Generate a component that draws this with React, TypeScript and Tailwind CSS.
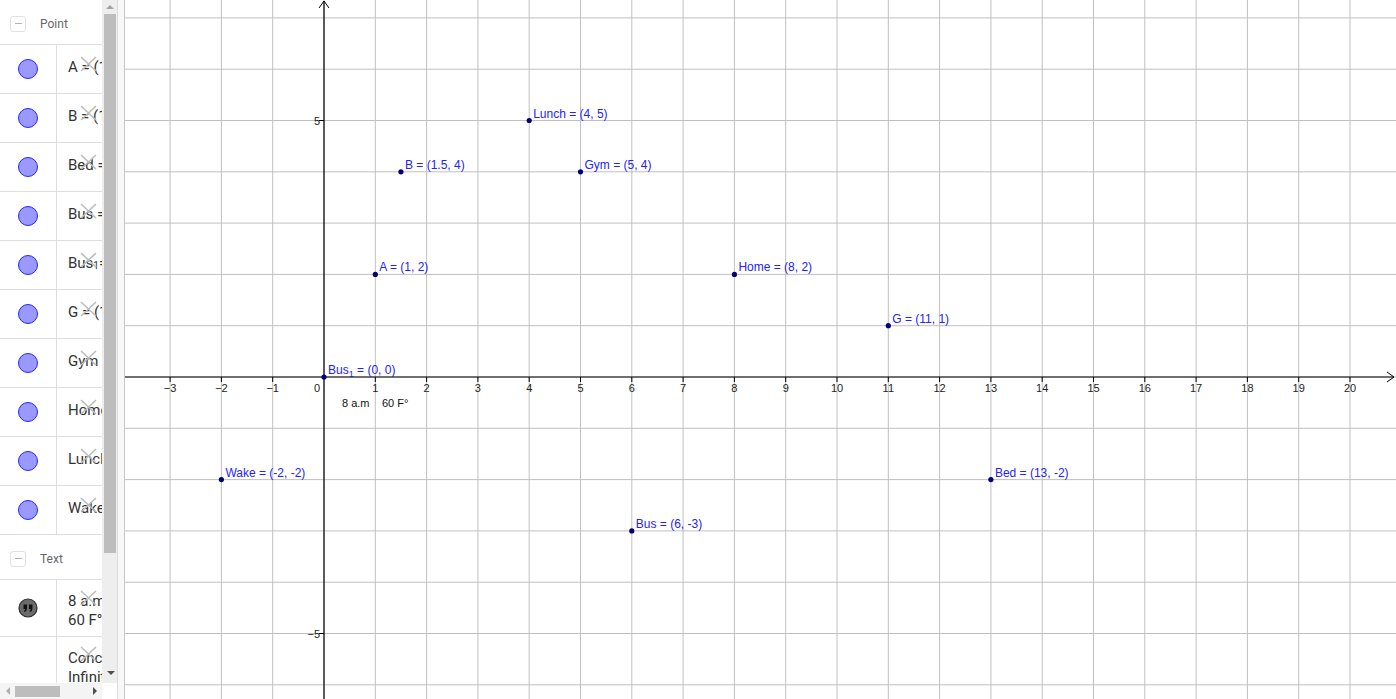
import React from "react";

const U = 51.3;
const OX = 324;
const OY = 377;
const GX = 125; // left edge of the graphics view

const px = (x: number) => OX + x * U;
const py = (y: number) => OY - y * U;

type Pt = { name: string; sub?: string; x: number; y: number };

const points: Pt[] = [
  { name: "A", x: 1, y: 2 },
  { name: "B", x: 1.5, y: 4 },
  { name: "Bed", x: 13, y: -2 },
  { name: "Bus", x: 6, y: -3 },
  { name: "Bus", sub: "1", x: 0, y: 0 },
  { name: "G", x: 11, y: 1 },
  { name: "Gym", x: 5, y: 4 },
  { name: "Home", x: 8, y: 2 },
  { name: "Lunch", x: 4, y: 5 },
  { name: "Wake", x: -2, y: -2 },
];

function DeleteX({ top }: { top: number }) {
  return (
    <svg
      className="absolute left-[80px] pointer-events-none"
      style={{ top }}
      width="17"
      height="16"
      viewBox="0 0 17 16"
    >
      <path d="M1 1 L16 15 M16 1 L1 15" stroke="#bcbcbc" strokeWidth="1.6" fill="none" />
    </svg>
  );
}

function GroupHeader({ label }: { label: string }) {
  return (
    <div className="h-[45px] pt-[3px] border-b border-[#dedede] flex items-center shrink-0">
      <div className="ml-[10px] w-[16px] h-[16px] rounded-[3px] border border-[#e2e2e2] flex items-center justify-center">
        <div className="w-[7px] h-px bg-[#b5b5b5]" />
      </div>
      <span className="ml-[14px] text-[12px] text-[#666] font-['Roboto',sans-serif]">{label}</span>
    </div>
  );
}

function PointRow({ p }: { p: Pt }) {
  const coords = `(${p.x}, ${p.y})`;
  return (
    <div className="relative h-[49px] border-b border-[#dedede] flex shrink-0">
      <div className="w-[57px] border-r border-[#dedede] flex items-center justify-center shrink-0">
        <div className="w-[20px] h-[20px] rounded-full bg-[#9999ff] border border-[#2626ff]" />
      </div>
      <div className="pl-[11px] pb-[3px] flex items-center whitespace-nowrap text-[15px] text-[#333] font-['Roboto',sans-serif] overflow-hidden">
        {p.name}
        {p.sub && <sub className="text-[10px]">{p.sub}</sub>}
        {` = ${coords}`}
      </div>
      <DeleteX top={11} />
    </div>
  );
}

function QuoteIcon() {
  return (
    <svg width="20" height="20" viewBox="0 0 20 20">
      <circle cx="10" cy="10" r="9" fill="#6b6b6b" stroke="#2e2e2e" strokeWidth="1.2" />
      <path d="M5.5 6.5 h3.5 v4 q0 2.5 -2.5 3.5 l-0.6 -0.9 q1.3 -0.8 1.4 -2 h-1.8 z" fill="#111" />
      <path d="M11 6.5 h3.5 v4 q0 2.5 -2.5 3.5 l-0.6 -0.9 q1.3 -0.8 1.4 -2 h-1.8 z" fill="#111" />
    </svg>
  );
}

function AlgebraPanel() {
  return (
    <div className="w-[117px] h-full flex flex-col shrink-0 bg-white">
      <div className="flex h-[683px]">
        <div className="w-[102px] overflow-hidden flex flex-col">
          <GroupHeader label="Point" />
          {points.map((p, i) => (
            <PointRow key={i} p={p} />
          ))}
          <GroupHeader label="Text" />
          <div className="relative h-[57px] border-b border-[#dedede] flex shrink-0">
            <div className="w-[57px] border-r border-[#dedede] flex items-center justify-center shrink-0">
              <QuoteIcon />
            </div>
            <div className="pl-[11px] pt-[12px] text-[15px] leading-[19px] text-[#333] font-['Roboto',sans-serif] whitespace-nowrap overflow-hidden">
              <div>8 a.m</div>
              <div>60 F°</div>
            </div>
            <DeleteX top={10} />
          </div>
          <div className="relative flex-1 flex">
            <div className="w-[57px] border-r border-[#dedede] shrink-0" />
            <div className="pl-[11px] pt-[12px] text-[15px] leading-[19px] text-[#333] font-['Roboto',sans-serif] whitespace-nowrap overflow-hidden">
              <div>Concert</div>
              <div>Infinity</div>
            </div>
            <DeleteX top={9} />
          </div>
        </div>
        {/* vertical scrollbar */}
        <div className="w-[15px] bg-[#eeeeee] flex flex-col items-center">
          <div className="h-[14px] flex items-center justify-center">
            <div className="w-0 h-0 border-l-[4px] border-r-[4px] border-b-[4px] border-l-transparent border-r-transparent border-b-[#a3a3a3]" />
          </div>
          <div className="w-[12px] h-[539px] bg-[#bdbdbd]" />
          <div className="flex-1" />
          <div className="h-[14px] flex items-center justify-center pl-[2px] mb-[3px]">
            <div className="w-0 h-0 border-l-[4px] border-r-[4px] border-t-[4px] border-l-transparent border-r-transparent border-t-[#505050]" />
          </div>
        </div>
      </div>
      {/* horizontal scrollbar */}
      <div className="flex h-[16px]">
        <div className="w-[102px] bg-[#f4f4f4] flex items-center">
          <div className="w-[15px] flex items-center justify-center">
            <div className="w-0 h-0 border-t-[4px] border-b-[4px] border-r-[4px] border-t-transparent border-b-transparent border-r-[#b0b0b0]" />
          </div>
          <div className="w-[45px] h-[11px] bg-[#bdbdbd]" />
          <div className="flex-1" />
          <div className="w-[15px] flex items-center justify-center">
            <div className="w-0 h-0 border-t-[4px] border-b-[4px] border-l-[4px] border-t-transparent border-b-transparent border-l-[#505050]" />
          </div>
        </div>
        <div className="flex-1 bg-white" />
      </div>
    </div>
  );
}

function Graphics() {
  const W = 1396 - GX;
  const xs: number[] = [];
  for (let k = -4; k <= 21; k++) {
    const x = px(k);
    if (x > GX && x < 1396) xs.push(k);
  }
  const ys: number[] = [];
  for (let k = -7; k <= 8; k++) {
    const y = py(k);
    if (y > 0 && y < 699) ys.push(k);
  }
  return (
    <svg width={W} height="699" viewBox={`${GX} 0 ${W} 699`} className="block shrink-0">
      <rect x={GX} y="0" width={W} height="699" fill="#fff" />
      {xs.map((k) => (
        <line key={"vx" + k} x1={px(k)} y1="0" x2={px(k)} y2="699" stroke="#c0c0c0" strokeWidth="1" />
      ))}
      {ys.map((k) => (
        <line key={"hy" + k} x1={GX} y1={py(k)} x2="1396" y2={py(k)} stroke="#c0c0c0" strokeWidth="1" />
      ))}
      {/* axes */}
      <line x1={GX} y1={OY} x2="1394" y2={OY} stroke="#000" strokeWidth="1.2" />
      <path d={`M1387 ${OY - 5} L1394 ${OY} L1387 ${OY + 5}`} stroke="#000" fill="none" strokeWidth="1" />
      <line x1={OX} y1="1" x2={OX} y2="699" stroke="#000" strokeWidth="1.2" />
      <path d={`M${OX - 5} 8 L${OX} 1 L${OX + 5} 8`} stroke="#000" fill="none" strokeWidth="1" />
      <g fontFamily="'Liberation Sans', Arial, sans-serif" fontSize="11" fill="#222">
        {xs
          .filter((k) => k !== 0 && k <= 20)
          .map((k) => (
            <g key={"tx" + k}>
              <line x1={px(k)} y1={OY} x2={px(k)} y2={OY + 5} stroke="#000" strokeWidth="1" />
              <text x={px(k)} y={OY + 15} textAnchor="middle">
                {k < 0 ? `\u2212${-k}` : k}
              </text>
            </g>
          ))}
        <text x={OX - 4} y={OY + 15} textAnchor="end">
          0
        </text>
        <line x1={OX - 5} y1={py(5)} x2={OX} y2={py(5)} stroke="#000" strokeWidth="1" />
        <text x={OX - 4} y={py(5) + 4} textAnchor="end">
          5
        </text>
        <line x1={OX - 5} y1={py(-5)} x2={OX} y2={py(-5)} stroke="#000" strokeWidth="1" />
        <text x={OX - 4} y={py(-5) + 4} textAnchor="end">
          {"\u22125"}
        </text>
        <text x="342" y={OY + 30} fill="#111">
          8 a.m
        </text>
        <text x="382" y={OY + 30} fill="#111">
          60 F°
        </text>
      </g>
      <g fontFamily="'Liberation Sans', Arial, sans-serif" fontSize="12" fill="#2222ff">
        {points.map((p, i) => (
          <g key={i}>
            <circle cx={px(p.x)} cy={py(p.y)} r="2.6" fill="#00007a" />
            <text x={px(p.x) + 4} y={py(p.y) - 3}>
              {p.name}
              {p.sub && (
                <tspan dy="3" fontSize="9">
                  {p.sub}
                </tspan>
              )}
              <tspan dy={p.sub ? -3 : 0}>{` = (${p.x}, ${p.y})`}</tspan>
            </text>
          </g>
        ))}
      </g>
    </svg>
  );
}

export default function App() {
  return (
    <div className="w-[1396px] h-[699px] flex overflow-hidden bg-white">
      <AlgebraPanel />
      <div className="w-[8px] h-full bg-[#f7f7f7] border-l border-[#dcdcdc] border-r border-r-[#c8c8c8] shrink-0" />
      <Graphics />
    </div>
  );
}
